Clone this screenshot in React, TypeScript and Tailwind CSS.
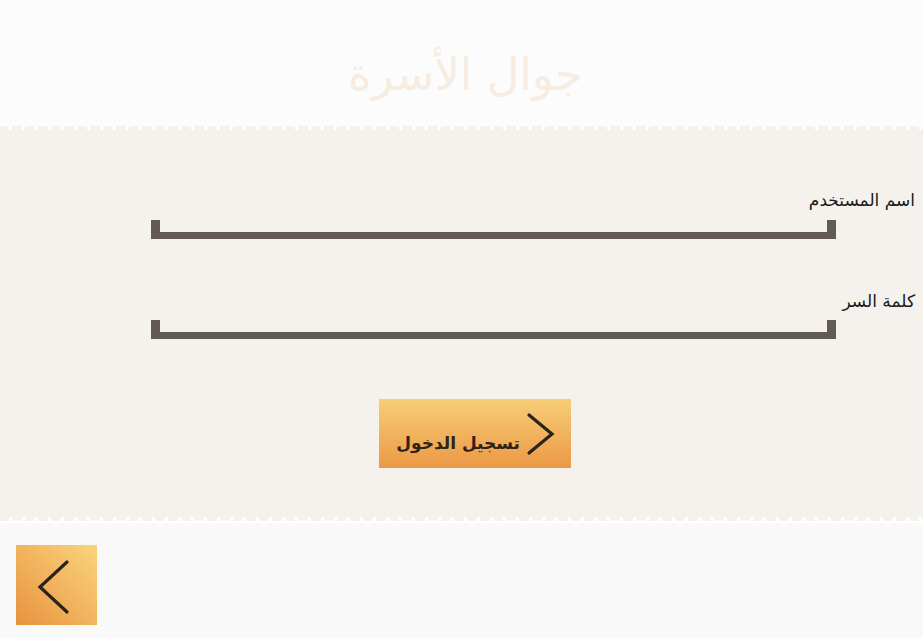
import React from "react";

const ar = { fontFamily: '"DejaVu Sans", "Noto Sans", sans-serif' };

function Bracket() {
  return <div className="ml-[151px] w-[685px] h-[19px] border-x-[9px] border-b-[7px] border-[#635a56]" />;
}

function Dots({ className }: { className?: string }) {
  return (
    <div
      className={
        "h-[4px] w-full bg-[radial-gradient(circle,#ffffff_1.6px,transparent_2.2px)] bg-[length:13px_4px] bg-[position:4px_0px] " +
        (className ?? "")
      }
    />
  );
}

export default function App() {
  return (
    <div className="w-[923px] h-[638px] overflow-hidden flex flex-col bg-[#f9f9f9]" style={ar}>
      <header className="h-[126px] bg-[#fcfcfc] flex items-center justify-center">
        <h1 dir="rtl" className="text-[45px] leading-none text-[#f6ece1] mt-[22px] pl-[8px]">
          جوال الأسرة
        </h1>
      </header>
      <main className="relative h-[395px] bg-[#f5f2ee] flex flex-col">
        <Dots className="absolute top-0 left-0" />
        <div className="pt-[62px]">
          <div dir="rtl" className="pr-[8px] text-[17px] leading-[24px] text-[#1a1a1a]">
            اسم المستخدم
          </div>
          <div className="mt-[8px]">
            <Bracket />
          </div>
        </div>
        <div className="pt-[50px]">
          <div dir="rtl" className="pr-[8px] text-[17px] leading-[24px] text-[#1a1a1a]">
            كلمة السر
          </div>
          <div className="mt-[7px]">
            <Bracket />
          </div>
        </div>
        <div className="pt-[60px] flex justify-start pl-[379px]">
          <button className="relative w-[192px] h-[69px] bg-gradient-to-b from-[#f7cd77] to-[#eb9944] flex items-center justify-end pr-[51px]">
            <span dir="rtl" className="text-[17px] font-bold text-[#2f2218] leading-none mt-[19px]">
              تسجيل الدخول
            </span>
            <svg className="absolute left-0 top-0" width="192" height="69" viewBox="0 0 192 69">
              <polyline points="150,16 173,35 150,54" fill="none" stroke="#2a221c" strokeWidth="3.2" strokeLinecap="round" strokeLinejoin="miter" />
            </svg>
          </button>
        </div>
        <Dots className="absolute bottom-0 left-0" />
      </main>
      <div className="h-[2px] bg-white" />
      <footer className="flex-1 bg-[#f9f9f9] pt-[22px] pl-[16px]">
        <button className="relative w-[81px] h-[80px] bg-gradient-to-tr from-[#e8923d] to-[#f9d57c]">
          <svg className="absolute left-0 top-0" width="81" height="80" viewBox="0 0 81 80">
            <polyline points="51,17 24,42 51,67" fill="none" stroke="#2a221c" strokeWidth="3.2" strokeLinecap="round" />
          </svg>
        </button>
      </footer>
    </div>
  );
}
